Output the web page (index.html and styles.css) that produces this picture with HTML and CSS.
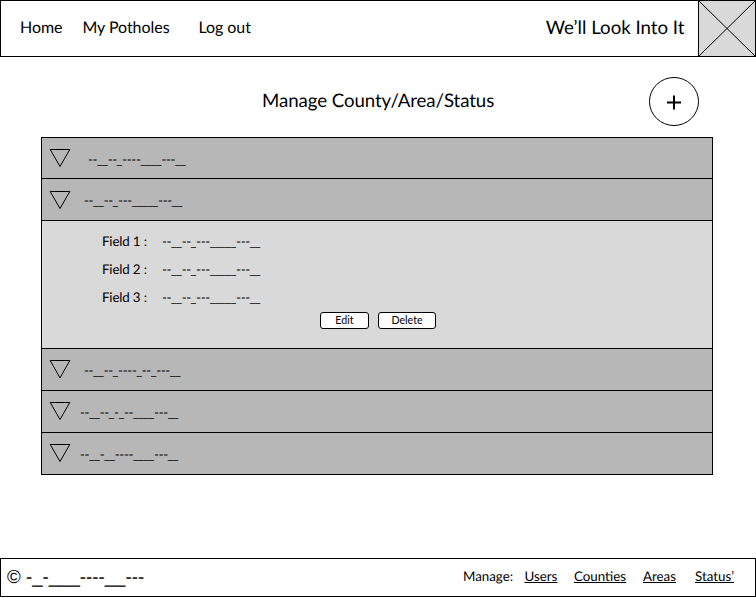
FILE: index.html
```html
<!DOCTYPE html>
<html lang="en">
<head>
<meta charset="utf-8">
<title>Manage County/Area/Status</title>
<link rel="stylesheet" href="styles.css">
</head>
<body>
<header class="top">
  <nav class="nav"><a class="home">Home</a><a class="potholes">My Potholes</a><a class="logout">Log out</a></nav>
  <div class="brand">We’ll Look Into It</div>
  <svg class="logo" viewBox="0 0 56 55"><path d="M0 0L56 55M56 0L0 55"/></svg>
</header>
<main>
  <div class="heading">
    <h1>Manage County/Area/Status</h1>
    <button class="add" aria-label="Add"><svg viewBox="0 0 50 49"><ellipse cx="25" cy="24.5" rx="24.5" ry="24"/><path d="M18 25.5H32M25 18.5V32.5"/></svg></button>
  </div>
  <section class="list">
    <div class="row first"><svg class="tri" viewBox="0 0 22 20"><path d="M1.2 1.5H20.8L11 18.5Z"/></svg><span class="name in8">--<i>__</i>--<i>_</i>----<i>____</i>---<i>__</i></span></div>
    <div class="row second"><svg class="tri" viewBox="0 0 22 20"><path d="M1.2 1.5H20.8L11 18.5Z"/></svg><span class="name in4">--<i>__</i>--<i>_</i>---<i>_____</i>---<i>__</i></span></div>
    <div class="detail">
      <div class="field"><span class="label">Field 1 :</span><span class="value">--<i>__</i>--<i>_</i>---<i>_____</i>---<i>__</i></span></div>
      <div class="field"><span class="label">Field 2 :</span><span class="value">--<i>__</i>--<i>_</i>---<i>_____</i>---<i>__</i></span></div>
      <div class="field"><span class="label">Field 3 :</span><span class="value">--<i>__</i>--<i>_</i>---<i>_____</i>---<i>__</i></span></div>
      <div class="actions"><button class="edit">Edit</button><button class="delete">Delete</button></div>
    </div>
    <div class="row"><svg class="tri" viewBox="0 0 22 20"><path d="M1.2 1.5H20.8L11 18.9Z"/></svg><span class="name in4">--<i>__</i>--<i>_</i>----<i>_</i>--<i>_</i>---<i>__</i></span></div>
    <div class="row"><svg class="tri" viewBox="0 0 22 20"><path d="M1.2 1.5H20.8L11 18.5Z"/></svg><span class="name">--<i>__</i>--<i>_</i>-<i>_</i>--<i>____</i>---<i>__</i></span></div>
    <div class="row"><svg class="tri" viewBox="0 0 22 20"><path d="M1.2 1.5H20.8L11 18.5Z"/></svg><span class="name">--<i>__</i>-<i>__</i>----<i>____</i>---<i>__</i></span></div>
  </section>
</main>
<footer class="bottom">
  <div class="copy">© -_-___----__---</div>
  <nav class="manage"><span class="m0">Manage:</span><a class="m1">Users</a><a class="m2">Counties</a><a class="m3">Areas</a><a class="m4">Status’</a></nav>
</footer>
</body>
</html>
```
FILE: styles.css
```css
* { box-sizing: border-box; }
body { margin: 0; width: 756px; height: 598px; background: #fff; color: #000; font-family: Lato, sans-serif; text-rendering: geometricPrecision; display: flex; flex-direction: column; overflow: hidden; }
svg { display: block; fill: none; stroke: #000; }
button { font-family: inherit; color: #000; padding: 0; }
.top { height: 57px; border: 1px solid #000; display: flex; align-items: stretch; }
.nav { display: flex; font-size: 16px; letter-spacing: -0.04px; line-height: 54px; padding-left: 19px; flex: 1; white-space: nowrap; }
.home { width: 62.4px; }
.potholes { width: 116px; }
.brand { font-size: 18.67px; line-height: 52px; padding-right: 13.5px; white-space: nowrap; }
.logo { width: 57px; height: 55px; background: #d9d9d9; border-left: 1px solid #000; }
.heading { height: 80px; display: flex; justify-content: flex-end; padding-right: 57px; }
h1 { margin: 0; font-weight: 400; font-size: 18.67px; letter-spacing: -0.07px; line-height: 87px; width: 387px; white-space: nowrap; }
.add { border: 0; background: none; width: 50px; height: 49px; margin-top: 20px; }
.add path { stroke-width: 2; }
.list { margin: 0 43px 0 41px; border: 1px solid #000; border-top: 0; font-size: 13.33px; }
.row { height: 42px; border-top: 1px solid #000; background: #b7b7b7; display: flex; padding: 10px 0 0 7px; }
.first { height: 41px; }
.second .tri { margin-top: 1px; }
.tri { width: 22px; height: 20px; }
.name { margin-left: 9px; line-height: 22px; white-space: nowrap; }
.name, .value { letter-spacing: -0.36px; }
i { font: 12px/1 "Open Sans", sans-serif; letter-spacing: -0.02px; }
.in4 { margin-left: 13px; }
.in8 { margin-left: 17px; }
.detail { height: 128px; border-top: 1px solid #000; background: #d9d9d9; padding: 6px 0 0 60px; }
.field { display: flex; height: 28px; line-height: 28px; white-space: nowrap; }
.label { width: 60px; letter-spacing: -0.15px; }
.actions { display: flex; gap: 9px; padding: 1px 0 0 218px; }
.actions button { height: 17px; border: 1px solid #000; border-radius: 3px; background: #fff; font-size: 10.67px; line-height: 14px; padding-bottom: 1px; }
.edit { width: 49px; }
.delete { width: 58px; }
.bottom { margin-top: 83px; height: 39px; border: 1px solid #000; display: flex; justify-content: space-between; line-height: 36px; white-space: nowrap; }
.copy { font-family: "Liberation Sans", sans-serif; font-size: 18.67px; padding-left: 6px; }
.manage { display: flex; font-size: 13.33px; line-height: 35px; }
.m0 { width: 61.5px; }
.m1 { width: 49.5px; }
.m2 { width: 69px; }
.m3 { width: 52px; }
.m4 { width: 60px; }
.manage a { text-decoration: underline; }
```
